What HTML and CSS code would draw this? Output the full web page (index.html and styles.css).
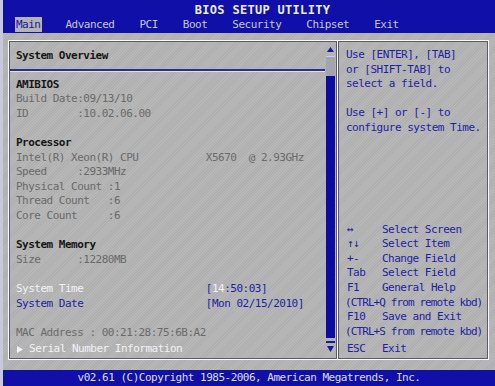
FILE: index.html
```html
<!DOCTYPE html>
<html lang="en">
<head>
    <meta charset="UTF-8">
    <title>BIOS Setup Utility</title>
    <link rel="stylesheet" href="styles.css">
</head>
<body>
    <div class="screen">
        <!-- Title and menu bar -->
        <div class="topbar">
            <div class="title">BIOS SETUP UTILITY</div>
            <div class="menu">
                <span class="tab active">Main</span>
                <span class="tab">Advanced</span>
                <span class="tab">PCI</span>
                <span class="tab">Boot</span>
                <span class="tab">Security</span>
                <span class="tab">Chipset</span>
                <span class="tab">Exit</span>
            </div>
        </div>

        <div class="body">
            <div class="panels">
                <!-- Left: system overview -->
                <div class="left-panel">
                    <div class="content">
                        <div class="line heading pad">System Overview</div>
                        <div class="separator"></div>
                        <div class="list">
                            <div class="line heading">AMIBIOS</div>
                            <div class="line">Build Date:09/13/10</div>
                            <div class="line">ID        :10.02.06.00</div>
                            <div class="line"> </div>
                            <div class="line heading">Processor</div>
                            <div class="line">Intel(R) Xeon(R) CPU           X5670  @ 2.93GHz</div>
                            <div class="line">Speed     :2933MHz</div>
                            <div class="line">Physical Count :1</div>
                            <div class="line">Thread Count   :6</div>
                            <div class="line">Core Count     :6</div>
                            <div class="line"> </div>
                            <div class="line heading">System Memory</div>
                            <div class="line">Size      :12280MB</div>
                            <div class="line"> </div>
                            <div class="line"><span class="hl">System Time</span>                    <span class="blue">[</span><span class="hl">14</span><span class="blue">:50:03]</span></div>
                            <div class="line blue">System Date                    [Mon 02/15/2010]</div>
                            <div class="line"> </div>
                            <div class="line">MAC Address : 00:21:28:75:6B:A2</div>
                            <div class="line hl submenu"><svg class="arrow" width="6" height="7" viewBox="0 0 6 7"><polygon points="0,0 6,3.5 0,7" fill="#f2f2f6"/></svg> Serial Number Information</div>
                        </div>
                    </div>
                    <!-- Scrollbar -->
                    <div class="scrollbar">
                        <svg class="sb-arrow" width="7" height="5" viewBox="0 0 7 5"><polygon points="3.5,0 7,5 0,5" fill="#1818a8"/></svg>
                        <div class="thumb"></div>
                        <div class="track"></div>
                        <div class="dash"></div>
                        <svg class="sb-arrow" width="7" height="6" viewBox="0 0 7 6"><polygon points="0,0 7,0 3.5,6" fill="#1818a8"/></svg>
                    </div>
                </div>

                <!-- Right: help -->
                <div class="right-panel">
                    <div class="help">
                        <div class="line">Use [ENTER], [TAB]</div>
                        <div class="line">or [SHIFT-TAB] to</div>
                        <div class="line">select a field.</div>
                        <div class="line"> </div>
                        <div class="line">Use [+] or [-] to</div>
                        <div class="line">configure system Time.</div>
                    </div>
                    <div class="keys">
                        <div class="key-row"><span class="key">&#8596;</span><span>Select Screen</span></div>
                        <div class="key-row"><span class="key">&#8593;&#8595;</span><span>Select Item</span></div>
                        <div class="key-row"><span class="key">+-</span><span>Change Field</span></div>
                        <div class="key-row"><span class="key">Tab</span><span>Select Field</span></div>
                        <div class="key-row"><span class="key">F1</span><span>General Help</span></div>
                        <div class="line tight">(CTRL+Q from remote kbd)</div>
                        <div class="key-row"><span class="key">F10</span><span>Save and Exit</span></div>
                        <div class="line tight">(CTRL+S from remote kbd)</div>
                        <div class="key-row esc"><span class="key">ESC</span><span>Exit</span></div>
                    </div>
                </div>
            </div>
        </div>

        <!-- Footer -->
        <div class="footer">v02.61 (C)Copyright 1985-2006, American Megatrends, Inc.</div>
    </div>
</body>
</html>
```

FILE: styles.css
```css
/* Reset and base font */
* {
    box-sizing: border-box;
    margin: 0;
    padding: 0;
}
body {
    background-color: #b4b4b4;
    font-family: "DejaVu Sans Mono", "Liberation Mono", monospace;
    font-size: 11px;
    letter-spacing: -0.5px;
}
.screen {
    width: 495px;
    height: 386px;
    display: flex;
    flex-direction: column;
    border-left: 3px solid #c8c8dc;
}
/* Top blue bar */
.topbar {
    background-color: #1010a8;
    height: 33px;
    padding-top: 3px;
}
.title {
    color: #ececf4;
    font-size: 12px;
    font-weight: bold;
    letter-spacing: 0.3px;
    line-height: 14px;
    text-align: center;
    padding-left: 27px;
}
.menu {
    display: flex;
    gap: 23px;
    padding-left: 12px;
}
.tab {
    color: #c4c4d4;
    line-height: 15px;
    padding: 0 1px;
}
.tab.active {
    background-color: #b4b4b4;
    color: #1818a0;
}
/* Gray middle area */
.body {
    flex: 1;
    background: repeating-linear-gradient(135deg, #b8b8b8 0 1px, #afafaf 1px 2px);
    padding: 7px 5px 10px 5px;
}
.panels {
    display: flex;
    height: 320px;
}
.line {
    line-height: 14.6px;
    height: 14.6px;
    white-space: pre;
    color: #6a6a6a;
}
.heading {
    color: #161616;
    font-weight: bold;
}
.blue {
    color: #1e1ea4;
}
.hl {
    color: #f2f2f6;
}
/* Left panel */
.left-panel {
    width: 330px;
    display: flex;
    border: 1px solid #fafafa;
    box-shadow: inset 0 0 0 1px #5a5a6a;
}
.content {
    flex: 1;
    padding-top: 8px;
}
.pad {
    padding-left: 7px;
}
.separator {
    margin: 5px 0 6px 1px;
    border-top: 2px solid #2a2aa8;
    border-bottom: 1px solid #e6e6b4;
}
.list {
    padding-left: 7px;
}
.submenu {
    margin-top: 2px;
}
.arrow {
    margin-left: 1px;
    vertical-align: -0.5px;
}
.scrollbar {
    width: 9px;
    margin: 0 2px 0 1px;
    padding: 6px 0 7px;
    display: flex;
    flex-direction: column;
    align-items: center;
}
.sb-arrow {
    flex: none;
}
.thumb {
    width: 9px;
    height: 20px;
    margin-top: 4px;
    background-color: #a4a4ac;
    border-top: 1px solid #d0d0d8;
}
.track {
    flex: 1;
    width: 9px;
    background-color: #0c0ca4;
}
.dash {
    width: 9px;
    height: 2px;
    margin: 3px 0 3px;
    background-color: #1818a8;
}
/* Right panel */
.right-panel {
    width: 151px;
    display: flex;
    flex-direction: column;
    justify-content: space-between;
    border: 1px solid #fafafa;
    border-left: none;
    box-shadow: inset 0 0 0 1px #5a5a6a;
    padding: 7px 0 2px 8px;
}
.right-panel .line {
    color: #1e1ea4;
}
.key-row {
    display: flex;
    line-height: 14.6px;
    height: 14.6px;
    color: #1e1ea4;
    white-space: pre;
}
.key {
    width: 36px;
    padding-left: 1px;
}
.tight {
    letter-spacing: -0.9px;
    margin-left: -1px;
}
.esc {
    margin-top: 3px;
}
/* Footer bar */
.footer {
    background-color: #1010a8;
    height: 16px;
    line-height: 16px;
    color: #dcdcec;
    text-align: center;
    white-space: pre;
}
```
